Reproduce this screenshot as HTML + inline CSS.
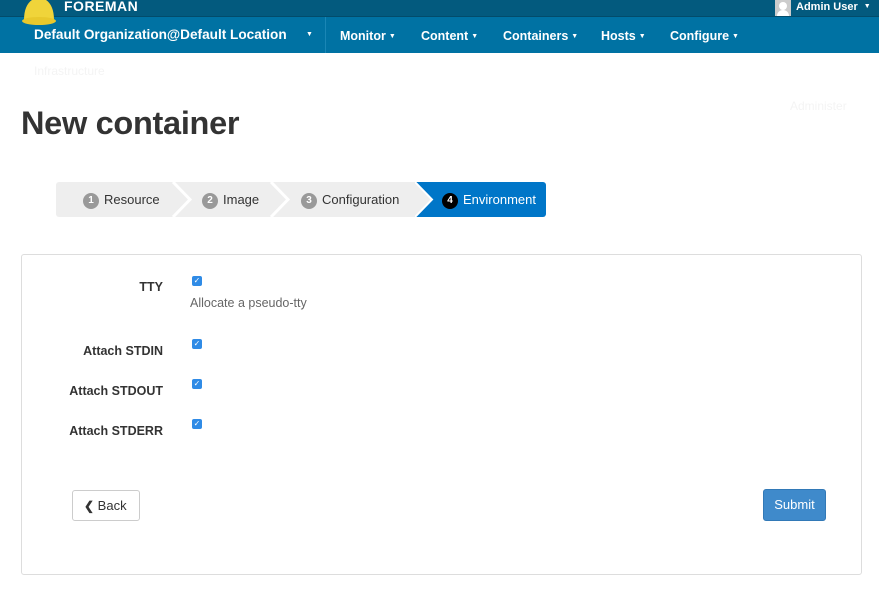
<!DOCTYPE html>
<html><head><style>
*{box-sizing:border-box;margin:0;padding:0}
body{width:879px;height:593px;background:#fff;font-family:"Liberation Sans",sans-serif;position:relative;overflow:hidden;color:#333}
.top{position:absolute;left:0;top:0;width:879px;height:17px;background:#035a7e;border-bottom:1px solid #024c6b}
.nav{position:absolute;left:0;top:17px;width:879px;height:36px;background:#0072a3}
.w{color:#fff;font-weight:bold;position:absolute;white-space:nowrap}
.c{font-size:7px;vertical-align:2px;margin-left:3px}
.abs{position:absolute;white-space:nowrap}
.step{position:absolute;top:182px;height:35px;background:#eee;font-size:13px;line-height:35px;color:#333}
.num{display:inline-block;width:16px;height:16px;border-radius:8px;background:#999;color:#fff;font-size:10px;font-weight:bold;text-align:center;line-height:16px;margin-right:5px;vertical-align:1px}
.cb{position:absolute;left:192px;width:10px;height:10px;border-radius:2px;background:#2f8be6;color:#fff;font-size:8px;line-height:10px;text-align:center}
.lbl{position:absolute;right:716px;font-size:12.5px;font-weight:bold;color:#333;white-space:nowrap}
</style></head><body>
<div class="top"></div>
<div class="nav"></div>
<svg class="abs" style="left:20px;top:0" width="38" height="26" viewBox="0 0 38 26"><path d="M4 20 C4 6 10 -2 19 -2 C28 -2 34 6 34 20 Z" fill="#f0d43a"/><ellipse cx="19" cy="21" rx="17" ry="4" fill="#e8c82c"/></svg>
<div class="w" style="left:64px;top:-2px;font-size:14px;letter-spacing:0.5px">FOREMAN</div>
<div class="abs" style="left:775px;top:0;width:16px;height:16px;background:#ccc"><div style="position:absolute;left:4px;top:2px;width:8px;height:8px;border-radius:4px;background:#fff"></div><div style="position:absolute;left:2px;top:10px;width:12px;height:6px;border-radius:6px 6px 0 0;background:#fff"></div></div>
<div class="w" style="left:796px;top:1px;font-size:11px">Admin User <span class="c">▼</span></div>
<div class="w" style="left:34px;top:27px;font-size:13.6px">Default Organization@Default Location</div>
<div class="w" style="left:306px;top:31px;font-size:7px">▼</div>
<div class="abs" style="left:325px;top:17px;width:1px;height:36px;background:#1a86b5"></div>
<div class="w" style="left:340px;top:29px;font-size:12.5px">Monitor<span class="c">▼</span></div>
<div class="w" style="left:421px;top:29px;font-size:12.5px">Content<span class="c">▼</span></div>
<div class="w" style="left:503px;top:29px;font-size:12.5px">Containers<span class="c">▼</span></div>
<div class="w" style="left:601px;top:29px;font-size:12.5px">Hosts<span class="c">▼</span></div>
<div class="w" style="left:670px;top:29px;font-size:12.5px">Configure<span class="c">▼</span></div>
<div class="abs" style="left:34px;top:64px;font-size:12px;color:#f4f4f4">Infrastructure</div>
<div class="abs" style="left:790px;top:99px;font-size:12px;color:#f4f4f4">Administer</div>
<div class="abs" style="left:21px;top:105px;font-size:32.5px;font-weight:bold;color:#333;letter-spacing:-0.3px">New container</div>

<div class="step" style="left:56px;width:118px;border-radius:3px 0 0 3px;padding-left:27px"><span class="num">1</span>Resource</div>
<div class="step" style="left:174px;width:100px;padding-left:28px"><span class="num">2</span>Image</div>
<div class="step" style="left:274px;width:141px;padding-left:27px"><span class="num">3</span>Configuration</div>
<svg class="abs" style="left:170px;top:182px" width="250" height="35"><polyline points="3,0 20,17.5 3,35" fill="none" stroke="#fff" stroke-width="3"/><polyline points="101,0 118,17.5 101,35" fill="none" stroke="#fff" stroke-width="3"/></svg>
<div class="step" style="left:415px;width:131px;background:#0076c8;color:#fff;border-radius:0 3px 3px 0;padding-left:27px"><span class="num" style="background:#000">4</span>Environment</div>
<svg class="abs" style="left:415px;top:182px" width="20" height="35"><polygon points="0,0 17,17.5 0,35" fill="#eee"/><polyline points="0,0 17,17.5 0,35" fill="none" stroke="#fff" stroke-width="2"/></svg>

<div class="abs" style="left:21px;top:254px;width:841px;height:321px;border:1px solid #ddd;border-radius:3px"></div>
<div class="lbl" style="top:280px">TTY</div>
<div class="cb" style="top:276px">✓</div>
<div class="abs" style="left:190px;top:296px;font-size:12.5px;color:#666">Allocate a pseudo-tty</div>
<div class="lbl" style="top:344px">Attach STDIN</div>
<div class="cb" style="top:339px">✓</div>
<div class="lbl" style="top:384px">Attach STDOUT</div>
<div class="cb" style="top:379px">✓</div>
<div class="lbl" style="top:424px">Attach STDERR</div>
<div class="cb" style="top:419px">✓</div>

<div class="abs" style="left:72px;top:490px;width:68px;height:31px;border:1px solid #ccc;border-radius:3px;font-size:13px;line-height:29px;padding-left:11px;color:#333"><b style="font-size:12px">❮</b> Back</div>
<div class="abs" style="left:763px;top:489px;width:63px;height:32px;background:#3f8acb;border:1px solid #3279b7;border-radius:3px;font-size:13px;line-height:30px;text-align:center;color:#fff">Submit</div>
</body></html>
